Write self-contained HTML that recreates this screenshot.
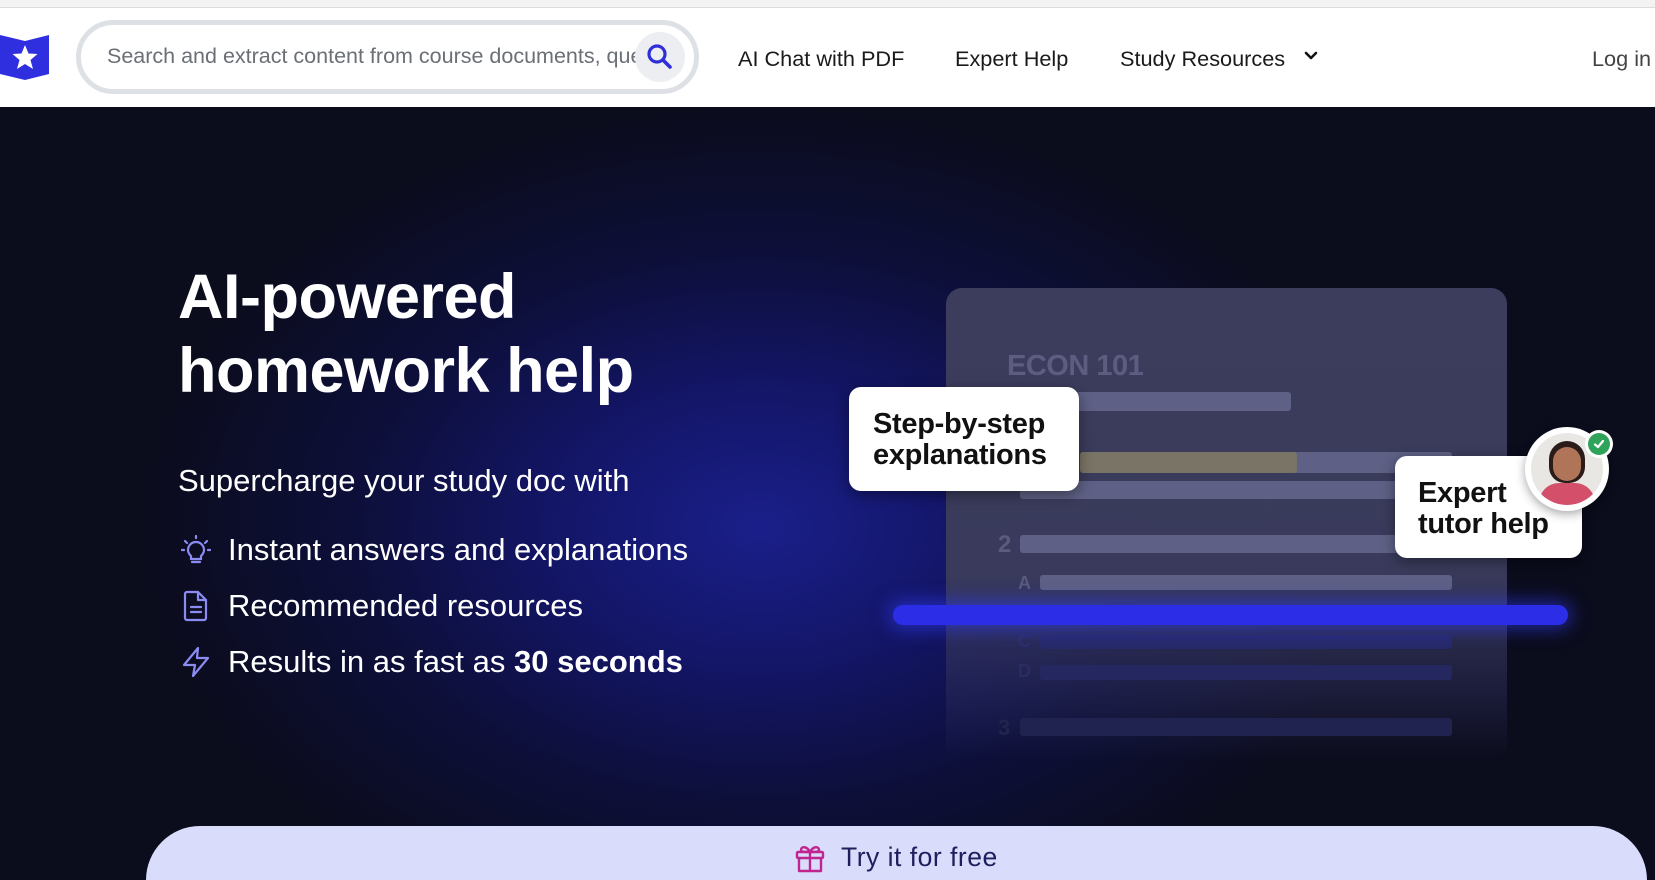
<!DOCTYPE html>
<html><head><meta charset="utf-8">
<style>
*{margin:0;padding:0;box-sizing:border-box}
html,body{width:1655px;height:880px;overflow:hidden;font-family:"Liberation Sans",Arial,sans-serif}
body{position:relative;background:#0b0c1c}
.topstrip{position:absolute;left:0;top:0;width:1655px;height:8px;background:#f3f3f3;border-bottom:1px solid #dcdcdc}
header{position:absolute;left:0;top:8px;width:1655px;height:99px;background:#fff}
.nav{position:absolute;top:38px;font-size:21.7px;color:#1a1a1a}
.hero{position:absolute;left:0;top:107px;width:1655px;height:773px;overflow:hidden;
background:radial-gradient(ellipse 620px 420px at 760px 420px,#1a1f8a 0%,#131565 35%,#0d0f3a 65%,rgba(11,12,28,0) 100%),#0b0c1c}
.abs{position:absolute}
h1{position:absolute;left:178px;top:153px;color:#fff;font-size:63px;line-height:74px;font-weight:700;letter-spacing:-0.5px}
.sub{position:absolute;left:178px;top:356px;color:#fff;font-size:31px}
.li{position:absolute;left:228px;color:#fff;font-size:31px}
.card{position:absolute;background:#fff;border-radius:12px;box-shadow:0 4px 14px rgba(0,0,0,.4);color:#111;font-weight:700;font-size:29px;line-height:31px;letter-spacing:-0.3px}
.bar{position:absolute;background:#5e6085;border-radius:3px}
</style></head><body>
<div class="topstrip"></div>
<header>
  <svg class="abs" style="left:0;top:24px" width="50" height="48" viewBox="0 0 50 48">
    <path d="M0 3 L25 9 L49 3 L49 42 L25 48 L0 42 Z" fill="#2f2fe0"/>
    <path d="M25 13 L28.5 21.5 L37.5 22 L30.5 28 L33 37 L25 32 L17 37 L19.5 28 L12.5 22 L21.5 21.5 Z" fill="#fff"/>
  </svg>
  <div class="abs" style="left:76px;top:12px;width:623px;height:74px;border:5px solid #dde1e6;border-radius:37px;background:#fff"></div>
  <div class="abs" style="left:107px;top:36px;width:530px;overflow:hidden;white-space:nowrap;font-size:21.5px;color:#6b6f76">Search and extract content from course documents, questions</div>
  <div class="abs" style="left:635px;top:24px;width:50px;height:50px;border-radius:25px;background:#eceef2"></div>
  <svg class="abs" style="left:646px;top:35px" width="28" height="28" viewBox="0 0 28 28"><circle cx="11" cy="11" r="8" fill="none" stroke="#2f2fd8" stroke-width="3.2"/><path d="M17 17 L24 24" stroke="#2f2fd8" stroke-width="3.6" stroke-linecap="round"/></svg>
  <div class="nav" style="left:738px">AI Chat with PDF</div>
  <div class="nav" style="left:955px">Expert Help</div>
  <div class="nav" style="left:1120px">Study Resources</div>
  <svg class="abs" style="left:1303px;top:42px" width="16" height="12" viewBox="0 0 16 12"><path d="M3 3 L8 8 L13 3" fill="none" stroke="#111" stroke-width="2.6" stroke-linecap="round" stroke-linejoin="round"/></svg>
  <div class="nav" style="left:1592px;color:#444">Log in</div>
</header>
<div class="hero">
  <h1>AI-powered<br>homework help</h1>
  <div class="sub">Supercharge your study doc with</div>
  <svg class="abs" style="left:181px;top:427px" width="30" height="32" viewBox="0 0 30 32" fill="none" stroke="#8b8cf2" stroke-width="2.2" stroke-linecap="round">
    <path d="M15 2v2M4 7l2 2M26 7l-2 2M1 16h2M27 16h2"/>
    <path d="M10 22c-2-2-3-4-3-6a8 8 0 0 1 16 0c0 2-1 4-3 6v3h-10z"/><path d="M11 28h8"/>
  </svg>
  <div class="li" style="top:425px">Instant answers and explanations</div>
  <svg class="abs" style="left:183px;top:483px" width="26" height="32" viewBox="0 0 26 32" fill="none" stroke="#8b8cf2" stroke-width="2.2" stroke-linejoin="round" stroke-linecap="round">
    <path d="M4 2h11l8 8v18a2 2 0 0 1-2 2H4a2 2 0 0 1-2-2V4a2 2 0 0 1 2-2z"/><path d="M15 2v8h8"/><path d="M8 17h10M8 22h10"/>
  </svg>
  <div class="li" style="top:481px">Recommended resources</div>
  <svg class="abs" style="left:181px;top:539px" width="30" height="32" viewBox="0 0 30 32" fill="none" stroke="#8b8cf2" stroke-width="2.2" stroke-linejoin="round">
    <path d="M17 2 L3 19 H14 L12 30 L27 12 H16 Z"/>
  </svg>
  <div class="li" style="top:537px">Results in as fast as <b>30 seconds</b></div>

  <div class="abs" style="left:946px;top:181px;width:561px;height:472px;border-radius:16px;background:linear-gradient(180deg,#3c3d5c 0%,#3a3b5c 60%,rgba(45,46,90,.5) 85%,rgba(20,22,60,0) 100%)"></div>
  <div class="abs" style="left:1007px;top:243px;font-size:29px;font-weight:700;color:#5c5d80;letter-spacing:-0.5px">ECON 101</div>
  <div class="bar" style="left:1020px;top:285px;width:271px;height:19px"></div>
  <div class="bar" style="left:1080px;top:345px;width:372px;height:21px"></div>
  <div class="abs" style="left:1080px;top:345px;width:217px;height:21px;background:#7a7466;border-radius:3px"></div>
  <div class="bar" style="left:1020px;top:374px;width:384px;height:18px"></div>
  <div class="abs" style="left:998px;top:424px;font-size:24px;font-weight:700;color:#5a5b7e">2</div>
  <div class="bar" style="left:1020px;top:428px;width:384px;height:18px"></div>
  <div class="abs" style="left:1018px;top:466px;font-size:18px;font-weight:700;color:#5a5b7e">A</div>
  <div class="bar" style="left:1040px;top:468px;width:412px;height:15px"></div>
  <div class="abs" style="left:1018px;top:524px;font-size:18px;font-weight:700;color:#2c2e6a">C</div>
  <div class="bar" style="left:1040px;top:528px;width:412px;height:14px;background:#272a68"></div>
  <div class="abs" style="left:1018px;top:554px;font-size:18px;font-weight:700;color:#2a2c62">D</div>
  <div class="bar" style="left:1040px;top:558px;width:412px;height:15px;background:#252860"></div>
  <div class="abs" style="left:998px;top:608px;font-size:22px;font-weight:700;color:#22244e">3</div>
  <div class="bar" style="left:1020px;top:611px;width:432px;height:18px;background:#202250"></div>
  <div class="abs" style="left:893px;top:498px;width:675px;height:20px;border-radius:10px;background:#2b2ee6;box-shadow:0 0 18px 4px rgba(50,60,255,.55)"></div>

  <div class="card" style="left:849px;top:280px;width:230px;height:104px;padding:22px 0 0 24px">Step-by-step<br>explanations</div>
  <div class="card" style="left:1395px;top:349px;width:187px;height:102px;padding:22px 0 0 23px">Expert<br>tutor help</div>
  <div class="abs" style="left:1525px;top:320px;width:84px;height:84px;border-radius:42px;background:#fff;box-shadow:0 3px 10px rgba(0,0,0,.35)"></div>
  <div class="abs" style="left:1531px;top:326px;width:72px;height:72px;border-radius:36px;overflow:hidden;background:#e9e7e4">
    <div class="abs" style="left:18px;top:8px;width:36px;height:42px;border-radius:18px 18px 16px 16px;background:#2a1c18"></div>
    <div class="abs" style="left:22px;top:14px;width:28px;height:34px;border-radius:14px;background:#b07458"></div>
    <div class="abs" style="left:8px;top:50px;width:56px;height:30px;border-radius:20px 20px 0 0;background:#d4506a"></div>
  </div>
  <div class="abs" style="left:1585px;top:323px;width:28px;height:28px;border-radius:14px;background:#fff"></div>
  <div class="abs" style="left:1588px;top:326px;width:22px;height:22px;border-radius:11px;background:#2fa35a"></div>
  <svg class="abs" style="left:1590px;top:328px" width="18" height="18" viewBox="0 0 18 18"><path d="M5 9.5 L8 12 L13 6" fill="none" stroke="#fff" stroke-width="2.2" stroke-linecap="round" stroke-linejoin="round"/></svg>

  <div class="abs" style="left:146px;top:719px;width:1501px;height:54px;border-radius:54px 54px 0 0;background:#d9ddfb"></div>
  <svg class="abs" style="left:794px;top:735px" width="32" height="32" viewBox="0 0 32 32" fill="none" stroke="#c0258f" stroke-width="2.4" stroke-linejoin="round" stroke-linecap="round">
    <rect x="3" y="10" width="26" height="6" rx="1"/><path d="M5 16v13h22V16"/><path d="M16 10v19"/>
    <path d="M16 10c-3-6-9-6-9-2 0 2 4 2 9 2zM16 10c3-6 9-6 9-2 0 2-4 2-9 2z"/>
  </svg>
  <div class="abs" style="left:841px;top:735px;font-size:26.5px;color:#1e1e5c;letter-spacing:0.5px">Try it for free</div>
</div>
</body></html>
